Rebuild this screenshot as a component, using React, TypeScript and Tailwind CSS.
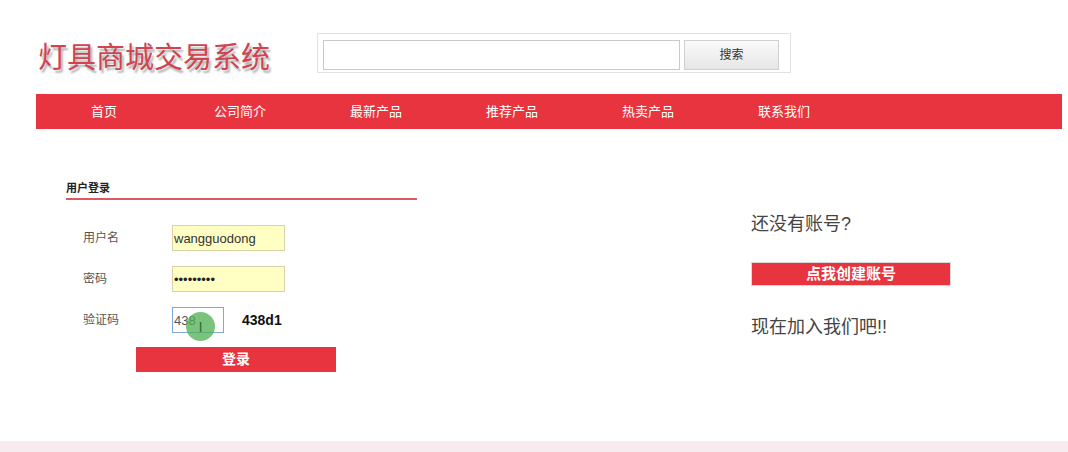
const navItems = ['首页', '公司简介', '最新产品', '推荐产品', '热卖产品', '联系我们'];

const font = "font-['Liberation_Sans','Noto_Sans_CJK_SC',sans-serif]";

const App = () => {
  return (
    <div className={`w-[1068px] h-[452px] bg-white flex flex-col ${font}`}>
      {/* header */}
      <div className="h-[94px] pt-[33px] pl-[38px] flex items-start">
        <h1 className="w-[279px] mt-[10px] text-[29px] leading-[30px] font-normal text-[#d0434f] [text-shadow:2px_3px_2px_rgba(0,0,0,0.3)] whitespace-nowrap">
          灯具商城交易系统
        </h1>
        <div className="w-[474px] h-[40px] border border-[#e2e2e2] pl-[5px] pt-[6px] flex gap-[4px]">
          <input
            readOnly
            className="w-[357px] h-[30px] border border-[#c9c9c9] bg-white outline-none"
          />
          <button className="w-[95px] h-[30px] border border-[#d0d0d0] bg-gradient-to-b from-[#fafafa] to-[#e6e6e6] text-[12px] text-[#333]">
            搜索
          </button>
        </div>
      </div>

      {/* nav */}
      <div className="ml-[36px] mr-[6px] h-[35px] bg-[#e7343f] flex items-center">
        {navItems.map((item) => (
          <a key={item} className="w-[136px] text-center text-[13px] text-white">
            {item}
          </a>
        ))}
      </div>

      {/* main */}
      <div className="flex-1 flex pl-[66px]">
        <div className="w-[351px] pt-[51px]">
          <div className="text-[11px] font-bold text-[#222] leading-[16px] pb-[2px] border-b-2 border-[#dd5962]">
            用户登录
          </div>
          <div className="pt-[25px] pl-[17px] flex flex-col gap-[15px]">
            <div className="flex items-center h-[26px]">
              <span className="w-[89px] text-[12px] text-[#555]">用户名</span>
              <input
                readOnly
                defaultValue="wangguodong"
                className="w-[113px] h-[26px] border border-[#d8d2a8] bg-[#ffffc4] px-[1px] text-[13px] text-[#333] outline-none"
              />
            </div>
            <div className="flex items-center h-[26px]">
              <span className="w-[89px] text-[12px] text-[#555]">密码</span>
              <input
                readOnly
                type="password"
                defaultValue="123456789"
                className="w-[113px] h-[26px] border border-[#d8d2a8] bg-[#ffffc4] px-[1px] text-[13px] text-[#222] outline-none"
              />
            </div>
            <div className="flex items-center h-[26px]">
              <span className="w-[89px] text-[12px] text-[#555]">验证码</span>
              <div className="relative">
                <input
                  readOnly
                  defaultValue="438"
                  className="w-[52px] h-[26px] border border-[#7fa9dc] bg-white px-[1px] text-[13px] text-[#555] outline-none"
                />
                <div className="absolute left-[14px] top-[5px] w-[29px] h-[29px] rounded-full bg-[#4caf50]/75 flex items-center justify-center text-[15px] leading-none text-[#3b6b3b]">
                  I
                </div>
              </div>
              <span className="ml-[18px] text-[14px] font-bold text-[#111]">438d1</span>
            </div>
          </div>
          <button className="mt-[14px] ml-[70px] w-[200px] h-[25px] bg-[#e7343f] text-white text-[14px] font-bold leading-[25px]">
            登录
          </button>
        </div>

        <div className="ml-[334px] pt-[83px] w-[200px]">
          <div className="text-[18px] leading-[24px] text-[#444]">还没有账号?</div>
          <button className="mt-[26px] w-[200px] h-[24px] bg-[#e7343f] border border-[#d9d9d9] text-white text-[15px] font-bold leading-[22px]">
            点我创建账号
          </button>
          <div className="mt-[29px] text-[18px] leading-[24px] text-[#444]">现在加入我们吧!!</div>
        </div>
      </div>

      {/* footer strip */}
      <div className="h-[11px] bg-[#f8ebef]" />
    </div>
  );
};

export default App;
